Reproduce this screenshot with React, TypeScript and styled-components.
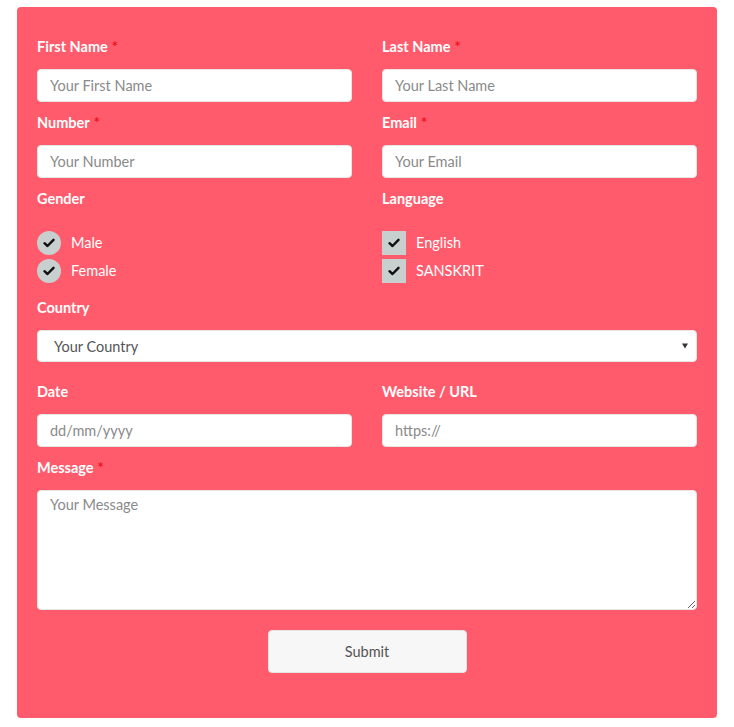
import React from "react";
import styled, { createGlobalStyle } from "styled-components";

const Global = createGlobalStyle`
  html, body { margin: 0; padding: 0; background: #ffffff; }
  body { font-family: Lato, "Open Sans", Arial, sans-serif; }
  * { box-sizing: border-box; }
`;

const Card = styled.form`
  margin: 7px 0 0 17px;
  width: 700px;
  height: 711px;
  background: #ff5b6c;
  border-radius: 4px;
  padding: 30px 20px 44px;
  display: flex;
  flex-direction: column;
`;

const Grid = styled.div`
  display: grid;
  grid-template-columns: 315px 315px;
  column-gap: 30px;
`;

const Field = styled.div<{ $mb?: number }>`
  display: flex;
  flex-direction: column;
  margin-bottom: ${(p) => p.$mb ?? 11}px;
`;

const Label = styled.label<{ $mb?: number }>`
  color: #ffffff;
  font-weight: 700;
  font-size: 14.5px;
  line-height: 20px;
  height: 20px;
  margin-bottom: ${(p) => p.$mb ?? 12}px;
  letter-spacing: 0px;
`;

const Req = styled.span`
  color: #f0141e;
  margin-left: 4px;
`;

const Input = styled.input`
  height: 33px;
  width: 100%;
  border: 1px solid #e6e6e6;
  border-radius: 4px;
  background: #ffffff;
  padding: 0 12px;
  font-family: inherit;
  font-size: 14.5px;
  color: #555;
  outline: none;
  &::placeholder { color: #8a8a8a; }
`;

const SelectBox = styled.div`
  position: relative;
  height: 32px;
  background: #ffffff;
  border-radius: 4px;
  border: 1px solid #e6e6e6;
  display: flex;
  align-items: center;
  padding: 0 16px;
  font-size: 14.5px;
  color: #555;
`;

const Caret = styled.span`
  position: absolute;
  right: 8px;
  top: 50%;
  transform: translateY(-50%);
  width: 0;
  height: 0;
  border-left: 3px solid transparent;
  border-right: 3px solid transparent;
  border-top: 5px solid #333;
`;

const TextArea = styled.textarea`
  height: 120px;
  width: 100%;
  border: 1px solid #e6e6e6;
  border-radius: 4px;
  background: #ffffff;
  padding: 5px 12px;
  font-family: inherit;
  font-size: 14.5px;
  color: #555;
  outline: none;
  resize: vertical;
  &::placeholder { color: #8a8a8a; }
`;

const Options = styled.div`
  display: flex;
  flex-direction: column;
  margin-top: 8px;
`;

const Option = styled.div`
  display: flex;
  align-items: center;
  height: 28px;
  gap: 10px;
  color: #ffffff;
  font-size: 14.5px;
  line-height: 26px;
`;

const Mark = styled.span<{ $round?: boolean }>`
  width: 24px;
  height: 24px;
  border-radius: ${(p) => (p.$round ? "50%" : "0")};
  background: #c8cfcf;
  display: flex;
  align-items: center;
  justify-content: center;
  flex-shrink: 0;
`;

const Submit = styled.button`
  align-self: center;
  width: 199px;
  height: 43px;
  margin-top: 9px;
  background: #f7f7f7;
  border: 1px solid #e4e4e4;
  border-radius: 4px;
  font-family: inherit;
  font-size: 14.5px;
  color: #555;
`;

const Check = () => (
  <svg width="12" height="10" viewBox="0 0 12 10">
    <path d="M1.5 5.2 L4.5 8 L10.5 1.8" stroke="#111" strokeWidth="2.4" fill="none" strokeLinecap="round" strokeLinejoin="round" />
  </svg>
);

export default function App() {
  return (
    <>
      <Global />
      <Card onSubmit={(e) => e.preventDefault()}>
        <Grid>
          <Field>
            <Label>First Name<Req>*</Req></Label>
            <Input placeholder="Your First Name" />
          </Field>
          <Field>
            <Label>Last Name<Req>*</Req></Label>
            <Input placeholder="Your Last Name" />
          </Field>
          <Field>
            <Label>Number<Req>*</Req></Label>
            <Input placeholder="Your Number" />
          </Field>
          <Field>
            <Label>Email<Req>*</Req></Label>
            <Input placeholder="Your Email" />
          </Field>
          <Field $mb={13}>
            <Label $mb={12}>Gender</Label>
            <Options>
              <Option><Mark $round><Check /></Mark>Male</Option>
              <Option><Mark $round><Check /></Mark>Female</Option>
            </Options>
          </Field>
          <Field $mb={13}>
            <Label $mb={12}>Language</Label>
            <Options>
              <Option><Mark><Check /></Mark>English</Option>
              <Option><Mark><Check /></Mark>SANSKRIT</Option>
            </Options>
          </Field>
        </Grid>
        <Field $mb={20}>
          <Label>Country</Label>
          <SelectBox>Your Country<Caret /></SelectBox>
        </Field>
        <Grid>
          <Field>
            <Label>Date</Label>
            <Input placeholder="dd/mm/yyyy" />
          </Field>
          <Field>
            <Label>Website / URL</Label>
            <Input placeholder="https://" />
          </Field>
        </Grid>
        <Field $mb={11}>
          <Label>Message<Req>*</Req></Label>
          <TextArea placeholder="Your Message" />
        </Field>
        <Submit type="submit">Submit</Submit>
      </Card>
    </>
  );
}
